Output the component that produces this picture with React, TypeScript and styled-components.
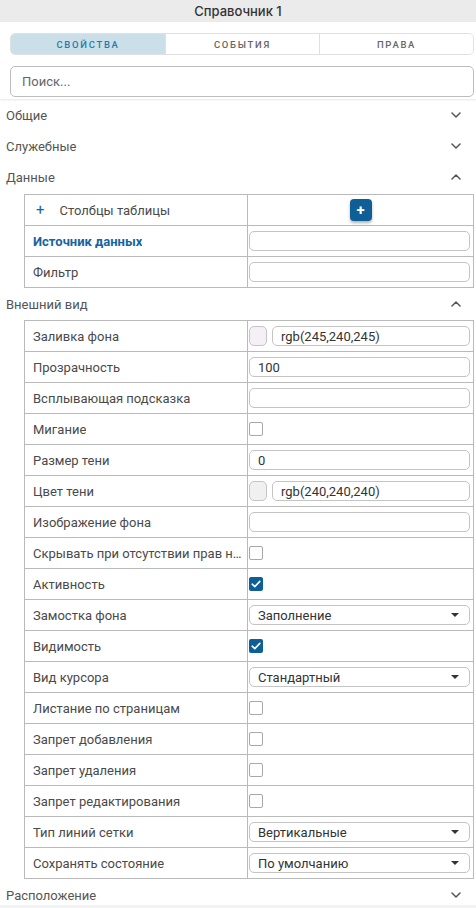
import React from 'react';
import styled, { createGlobalStyle } from 'styled-components';

const GlobalStyle = createGlobalStyle`
  html, body {
    margin: 0;
    padding: 0;
    background: #f3f3f3;
  }
  body {
    font-family: Roboto, "Noto Sans", sans-serif;
    color: #4a4a4a;
  }
  * { box-sizing: border-box; }
`;

type Field =
  | { kind: 'text'; label: string; value?: string; accent?: boolean }
  | { kind: 'color'; label: string; value: string; swatch: string }
  | { kind: 'check'; label: string; checked?: boolean }
  | { kind: 'select'; label: string; value: string }
  | { kind: 'add'; label: string };

const dataFields: Field[] = [
  { kind: 'add', label: 'Столбцы таблицы' },
  { kind: 'text', label: 'Источник данных', accent: true },
  { kind: 'text', label: 'Фильтр' },
];

const viewFields: Field[] = [
  { kind: 'color', label: 'Заливка фона', value: 'rgb(245,240,245)', swatch: 'rgb(245,240,245)' },
  { kind: 'text', label: 'Прозрачность', value: '100' },
  { kind: 'text', label: 'Всплывающая подсказка' },
  { kind: 'check', label: 'Мигание' },
  { kind: 'text', label: 'Размер тени', value: '0' },
  { kind: 'color', label: 'Цвет тени', value: 'rgb(240,240,240)', swatch: 'rgb(240,240,240)' },
  { kind: 'text', label: 'Изображение фона' },
  { kind: 'check', label: 'Скрывать при отсутствии прав на просмотр' },
  { kind: 'check', label: 'Активность', checked: true },
  { kind: 'select', label: 'Замостка фона', value: 'Заполнение' },
  { kind: 'check', label: 'Видимость', checked: true },
  { kind: 'select', label: 'Вид курсора', value: 'Стандартный' },
  { kind: 'check', label: 'Листание по страницам' },
  { kind: 'check', label: 'Запрет добавления' },
  { kind: 'check', label: 'Запрет удаления' },
  { kind: 'check', label: 'Запрет редактирования' },
  { kind: 'select', label: 'Тип линий сетки', value: 'Вертикальные' },
  { kind: 'select', label: 'Сохранять состояние', value: 'По умолчанию' },
];

const Page = styled.div`
  height: 905px;
  overflow: hidden;
  background: #fff;
  display: flex;
  flex-direction: column;
`;

const Title = styled.div`
  height: 22px;
  flex: none;
  background: #ebebeb;
  display: flex;
  align-items: center;
  justify-content: center;
  font-family: Inter, sans-serif;
  font-size: 13px;
  font-weight: 500;
  color: #333;
`;

const Controls = styled.div`
  flex: none;
  padding: 11px 2px 2px 10px;
  display: flex;
  flex-direction: column;
  gap: 11px;
  box-shadow: 0 1px 2px rgba(0, 0, 0, 0.1);
  position: relative;
  z-index: 1;
`;

const Tabs = styled.div`
  display: grid;
  grid-template-columns: repeat(3, 1fr);
  height: 22px;
  border: 1px solid #e0e0e0;
  border-radius: 5px;
  overflow: hidden;
`;

const Tab = styled.div<{ $active?: boolean }>`
  display: flex;
  align-items: center;
  justify-content: center;
  font-size: 9.5px;
  font-weight: 500;
  letter-spacing: 1.7px;
  color: ${p => (p.$active ? '#2b78a8' : '#666')};
  background: ${p => (p.$active ? '#cadfe8' : '#fff')};
  & + & { border-left: 1px solid #e0e0e0; }
`;

const Search = styled.input`
  height: 31px;
  border: 1px solid #bdbdbd;
  border-radius: 5px;
  padding: 0 11px;
  font: inherit;
  font-size: 13px;
  color: #333;
  outline: none;
  &::placeholder { color: #666; }
`;

const Body = styled.div`
  flex: 1;
  overflow: hidden;
  display: flex;
  flex-direction: column;
`;

const SectionHead = styled.div`
  height: 31px;
  flex: none;
  display: flex;
  align-items: center;
  justify-content: space-between;
  padding: 1px 15px 0 6px;
  font-size: 13px;
  color: #555;
`;

const Table = styled.div<{ $gap: number }>`
  margin: ${p => p.$gap}px 2px 0 24px;
  border: 1px solid #bababa;
  border-bottom: none;
`;

const Row = styled.div`
  display: grid;
  grid-template-columns: 223px 1fr;
  height: 31px;
  border-bottom: 1px solid #bababa;
`;

const Label = styled.div<{ $accent?: boolean }>`
  display: flex;
  align-items: center;
  gap: 15px;
  padding: 0 2px 0 8px;
  border-right: 1px solid #bababa;
  font-size: 13px;
  font-weight: ${p => (p.$accent ? 700 : 400)};
  color: ${p => (p.$accent ? '#1565a0' : 'inherit')};
  white-space: nowrap;
  overflow: hidden;
  min-width: 0;
`;

const LabelText = styled.span`
  overflow: hidden;
  text-overflow: ellipsis;
`;

const PlusGlyph = styled.span`
  color: #1565a0;
  font-size: 15px;
  font-weight: 400;
  padding-left: 3px;
`;

const Value = styled.div<{ $center?: boolean }>`
  display: flex;
  align-items: center;
  justify-content: ${p => (p.$center ? 'center' : 'flex-start')};
  gap: 5px;
  padding: 0 3px 0 1px;
  min-width: 0;
`;

const Box = styled.div`
  flex: 1;
  height: 20px;
  border: 1px solid #c4c4c4;
  border-radius: 5px;
  display: flex;
  align-items: center;
  padding: 0 8px;
  font-size: 13px;
  color: #333;
  min-width: 0;
`;

const Swatch = styled.div<{ $fill: string }>`
  width: 18px;
  height: 20px;
  flex: none;
  border: 1px solid #c4c4c4;
  border-radius: 5px;
  background: ${p => p.$fill};
`;

const SelectBox = styled(Box)`
  justify-content: space-between;
  padding-right: 10px;
`;

const Caret = styled.span`
  width: 0;
  height: 0;
  border-left: 4px solid transparent;
  border-right: 4px solid transparent;
  border-top: 4px solid #333;
`;

const Check = styled.div<{ $on?: boolean }>`
  width: 14px;
  height: 14px;
  flex: none;
  border-radius: 2px;
  border: ${p => (p.$on ? 'none' : '1.5px solid #a8a8a8')};
  background: ${p => (p.$on ? '#0e5f96' : '#fff')};
  display: flex;
  align-items: center;
  justify-content: center;
`;

const AddButton = styled.div`
  width: 22px;
  height: 22px;
  border-radius: 4px;
  background: #0e5f96;
  box-shadow: 0 2px 3px rgba(0, 0, 0, 0.3);
  display: flex;
  align-items: center;
  justify-content: center;
  color: #fff;
  font-size: 15px;
  font-weight: 700;
  line-height: 1;
  margin-left: 2px;
`;

const Chevron = ({ up }: { up?: boolean }) => (
  <svg width="10" height="6" viewBox="0 0 10 6" fill="none">
    <path
      d={up ? 'M1 5 L5 1 L9 5' : 'M1 1 L5 5 L9 1'}
      stroke="#555"
      strokeWidth="1.5"
      strokeLinecap="round"
      strokeLinejoin="round"
    />
  </svg>
);

const Tick = () => (
  <svg width="10" height="8" viewBox="0 0 10 8" fill="none">
    <path d="M1.2 4.2 L3.8 6.6 L8.8 1.4" stroke="#fff" strokeWidth="1.6" strokeLinecap="round" strokeLinejoin="round" />
  </svg>
);

function FieldValue({ field }: { field: Field }) {
  switch (field.kind) {
    case 'add':
      return (
        <Value $center>
          <AddButton>+</AddButton>
        </Value>
      );
    case 'color':
      return (
        <Value>
          <Swatch $fill={field.swatch} />
          <Box>{field.value}</Box>
        </Value>
      );
    case 'check':
      return (
        <Value>
          <Check $on={field.checked}>{field.checked && <Tick />}</Check>
        </Value>
      );
    case 'select':
      return (
        <Value>
          <SelectBox>
            {field.value}
            <Caret />
          </SelectBox>
        </Value>
      );
    default:
      return (
        <Value>
          <Box>{field.value}</Box>
        </Value>
      );
  }
}

function PropTable({ fields, gap }: { fields: Field[]; gap: number }) {
  return (
    <Table $gap={gap}>
      {fields.map(f => (
        <Row key={f.label}>
          <Label $accent={f.kind === 'text' && f.accent}>
            {f.kind === 'add' && <PlusGlyph>+</PlusGlyph>}
            <LabelText>{f.label}</LabelText>
          </Label>
          <FieldValue field={f} />
        </Row>
      ))}
    </Table>
  );
}

function Section({ title, open }: { title: string; open?: boolean }) {
  return (
    <SectionHead>
      {title}
      <Chevron up={open} />
    </SectionHead>
  );
}

export default function App() {
  return (
    <>
      <GlobalStyle />
      <Page>
        <Title>Справочник 1</Title>
        <Controls>
          <Tabs>
            <Tab $active>СВОЙСТВА</Tab>
            <Tab>СОБЫТИЯ</Tab>
            <Tab>ПРАВА</Tab>
          </Tabs>
          <Search placeholder="Поиск..." />
        </Controls>
        <Body>
          <Section title="Общие" />
          <Section title="Служебные" />
          <Section title="Данные" open />
          <PropTable fields={dataFields} gap={2} />
          <Section title="Внешний вид" open />
          <PropTable fields={viewFields} gap={1} />
          <Section title="Расположение" />
        </Body>
      </Page>
    </>
  );
}
